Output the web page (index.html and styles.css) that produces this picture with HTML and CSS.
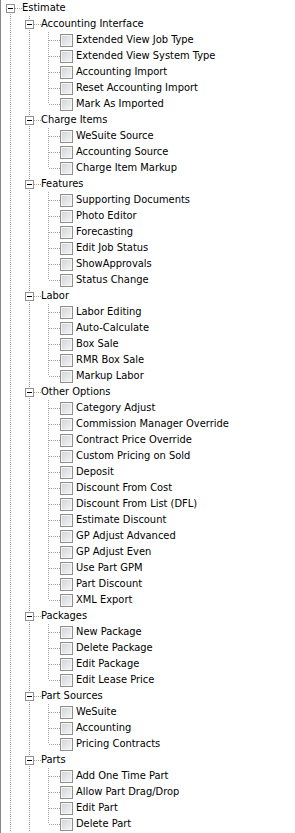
FILE: index.html
```html
<!DOCTYPE html>
<html>
  <head>
    <meta charset="utf-8" />
    <title>Permissions</title>
    <link rel="stylesheet" href="styles.css">
  </head>

  <body>
    <ul class="tree">
      <li>
        <div class="row first"><span class="exp"></span><span class="label">Estimate</span></div>
        <ul class="sub">
          <li>
            <div class="row"><span class="exp"></span><span class="label">Accounting Interface</span></div>
            <ul class="sub">
              <li class="row leaf"><span class="check"></span><span class="label">Extended View Job Type</span></li>
              <li class="row leaf"><span class="check"></span><span class="label">Extended View System Type</span></li>
              <li class="row leaf"><span class="check"></span><span class="label">Accounting Import</span></li>
              <li class="row leaf"><span class="check"></span><span class="label">Reset Accounting Import</span></li>
              <li class="row leaf last"><span class="check"></span><span class="label">Mark As Imported</span></li>
            </ul>
          </li>
          <li>
            <div class="row"><span class="exp"></span><span class="label">Charge Items</span></div>
            <ul class="sub">
              <li class="row leaf"><span class="check"></span><span class="label">WeSuite Source</span></li>
              <li class="row leaf"><span class="check"></span><span class="label">Accounting Source</span></li>
              <li class="row leaf last"><span class="check"></span><span class="label">Charge Item Markup</span></li>
            </ul>
          </li>
          <li>
            <div class="row"><span class="exp"></span><span class="label">Features</span></div>
            <ul class="sub">
              <li class="row leaf"><span class="check"></span><span class="label">Supporting Documents</span></li>
              <li class="row leaf"><span class="check"></span><span class="label">Photo Editor</span></li>
              <li class="row leaf"><span class="check"></span><span class="label">Forecasting</span></li>
              <li class="row leaf"><span class="check"></span><span class="label">Edit Job Status</span></li>
              <li class="row leaf"><span class="check"></span><span class="label">ShowApprovals</span></li>
              <li class="row leaf last"><span class="check"></span><span class="label">Status Change</span></li>
            </ul>
          </li>
          <li>
            <div class="row"><span class="exp"></span><span class="label">Labor</span></div>
            <ul class="sub">
              <li class="row leaf"><span class="check"></span><span class="label">Labor Editing</span></li>
              <li class="row leaf"><span class="check"></span><span class="label">Auto-Calculate</span></li>
              <li class="row leaf"><span class="check"></span><span class="label">Box Sale</span></li>
              <li class="row leaf"><span class="check"></span><span class="label">RMR Box Sale</span></li>
              <li class="row leaf last"><span class="check"></span><span class="label">Markup Labor</span></li>
            </ul>
          </li>
          <li>
            <div class="row"><span class="exp"></span><span class="label">Other Options</span></div>
            <ul class="sub">
              <li class="row leaf"><span class="check"></span><span class="label">Category Adjust</span></li>
              <li class="row leaf"><span class="check"></span><span class="label">Commission Manager Override</span></li>
              <li class="row leaf"><span class="check"></span><span class="label">Contract Price Override</span></li>
              <li class="row leaf"><span class="check"></span><span class="label">Custom Pricing on Sold</span></li>
              <li class="row leaf"><span class="check"></span><span class="label">Deposit</span></li>
              <li class="row leaf"><span class="check"></span><span class="label">Discount From Cost</span></li>
              <li class="row leaf"><span class="check"></span><span class="label">Discount From List (DFL)</span></li>
              <li class="row leaf"><span class="check"></span><span class="label">Estimate Discount</span></li>
              <li class="row leaf"><span class="check"></span><span class="label">GP Adjust Advanced</span></li>
              <li class="row leaf"><span class="check"></span><span class="label">GP Adjust Even</span></li>
              <li class="row leaf"><span class="check"></span><span class="label">Use Part GPM</span></li>
              <li class="row leaf"><span class="check"></span><span class="label">Part Discount</span></li>
              <li class="row leaf last"><span class="check"></span><span class="label">XML Export</span></li>
            </ul>
          </li>
          <li>
            <div class="row"><span class="exp"></span><span class="label">Packages</span></div>
            <ul class="sub">
              <li class="row leaf"><span class="check"></span><span class="label">New Package</span></li>
              <li class="row leaf"><span class="check"></span><span class="label">Delete Package</span></li>
              <li class="row leaf"><span class="check"></span><span class="label">Edit Package</span></li>
              <li class="row leaf last"><span class="check"></span><span class="label">Edit Lease Price</span></li>
            </ul>
          </li>
          <li>
            <div class="row"><span class="exp"></span><span class="label">Part Sources</span></div>
            <ul class="sub">
              <li class="row leaf"><span class="check"></span><span class="label">WeSuite</span></li>
              <li class="row leaf"><span class="check"></span><span class="label">Accounting</span></li>
              <li class="row leaf last"><span class="check"></span><span class="label">Pricing Contracts</span></li>
            </ul>
          </li>
          <li>
            <div class="row"><span class="exp"></span><span class="label">Parts</span></div>
            <ul class="sub">
              <li class="row leaf"><span class="check"></span><span class="label">Add One Time Part</span></li>
              <li class="row leaf"><span class="check"></span><span class="label">Allow Part Drag/Drop</span></li>
              <li class="row leaf"><span class="check"></span><span class="label">Edit Part</span></li>
              <li class="row leaf last"><span class="check"></span><span class="label">Delete Part</span></li>
            </ul>
          </li>
        </ul>
      </li>
    </ul>
  </body>
</html>
```

FILE: styles.css
```css
* {
    box-sizing: border-box;
}

html {
    height: 100%;
}

body {
    margin: 0;
    min-height: 100%;
    overflow: hidden;
    background-color: #fff;
    border-left: 1px solid #828790;

    font-family: 'DejaVu Sans Condensed', 'DejaVu Sans', sans-serif;
    font-size: 11px;
    color: #000;
}

ul {
    list-style: none;
    margin: 0;
    padding: 0;
}

/* child lists are indented one level and carry the parent's sibling line */
.sub {
    padding-left: 19px;
    background: repeating-linear-gradient(to bottom, #a0a0a0 0 1px, transparent 1px 2px) 9px 0 / 1px 2px repeat-y;
}

.row {
    display: flex;
    align-items: center;
    height: 16px;
    padding-left: 5px;
    white-space: nowrap;

    background:
        repeating-linear-gradient(to bottom, #a0a0a0 0 1px, transparent 1px 2px) 9px 0 / 1px 16px no-repeat,
        repeating-linear-gradient(to right, #a0a0a0 0 1px, transparent 1px 2px) 10px 8px / 11px 1px no-repeat;
}

.row.first {
    background:
        repeating-linear-gradient(to bottom, #a0a0a0 0 1px, transparent 1px 2px) 9px 8px / 1px 8px no-repeat,
        repeating-linear-gradient(to right, #a0a0a0 0 1px, transparent 1px 2px) 10px 8px / 11px 1px no-repeat;
}

.row.last {
    background:
        repeating-linear-gradient(to bottom, #a0a0a0 0 1px, transparent 1px 2px) 9px 0 / 1px 8px no-repeat,
        repeating-linear-gradient(to right, #a0a0a0 0 1px, transparent 1px 2px) 10px 8px / 11px 1px no-repeat;
}

.leaf {
    padding-left: 21px;
}

.label {
    line-height: 16px;
}

/* expand / collapse box */
.exp {
    display: flex;
    align-items: center;
    justify-content: center;
    width: 9px;
    height: 9px;
    margin-top: 1px;
    margin-right: 7px;
    background-color: #fff;
    border: 1px solid #919191;
}

.exp::before {
    content: '';
    width: 5px;
    height: 1px;
    background-color: #000;
}

.check {
    flex: none;
    width: 13px;
    height: 13px;
    margin-right: 3px;
    border: 1px solid #8e8f8f;
    background: linear-gradient(135deg, #cfd1d4, #f7f7f7);
    box-shadow: inset 0 0 0 1px #f4f4f4;
}
```
